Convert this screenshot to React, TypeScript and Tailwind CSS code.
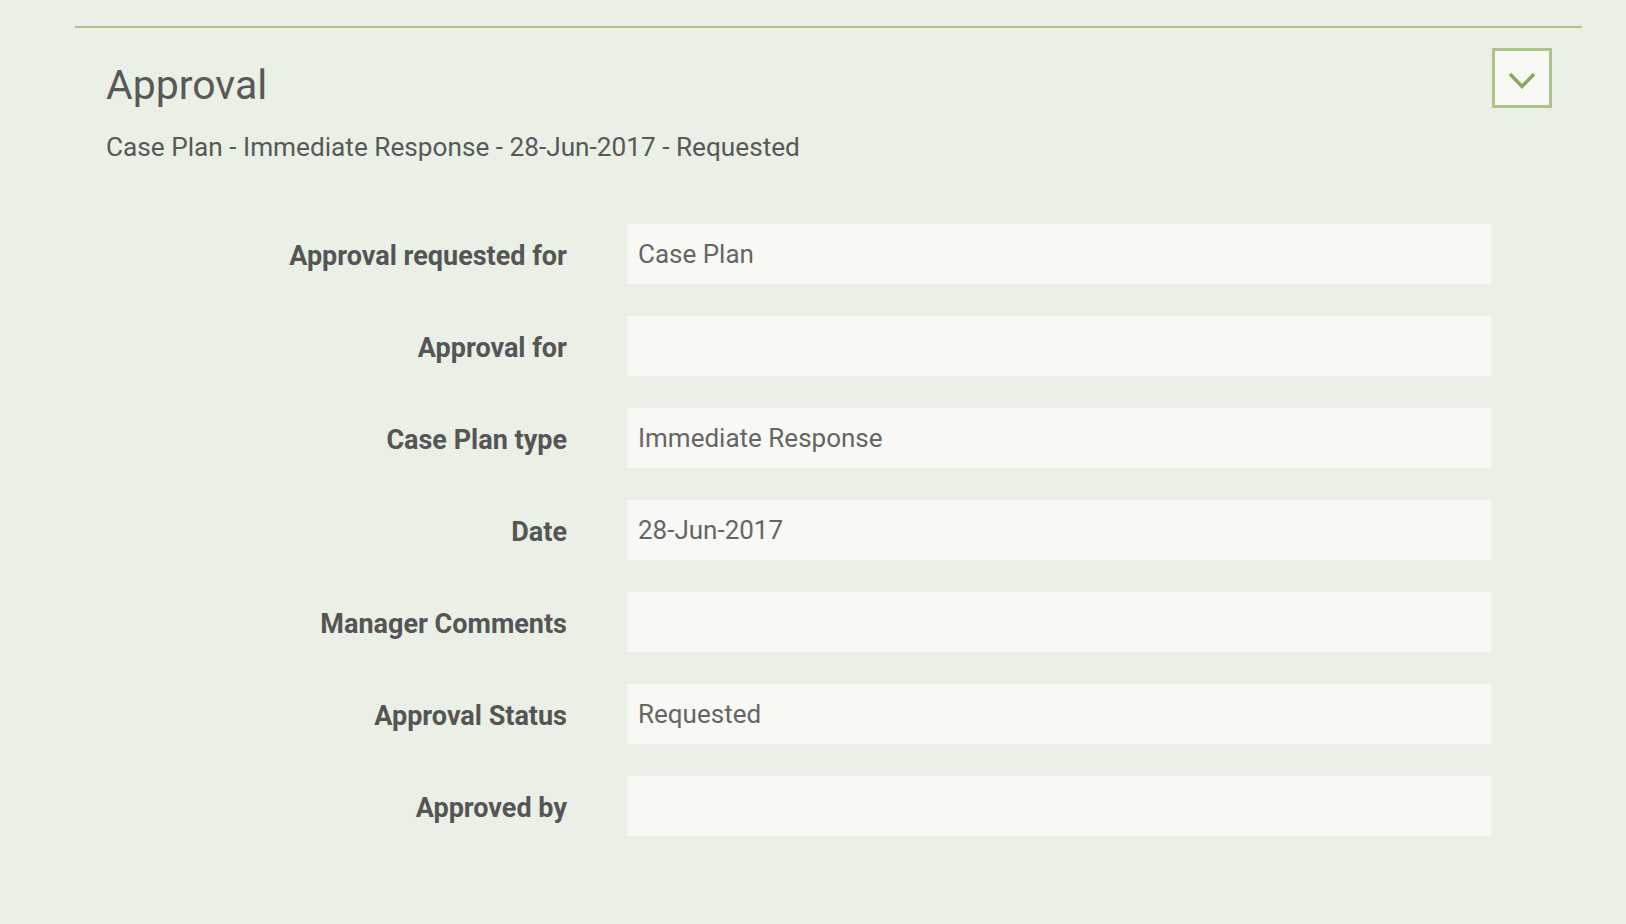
const fields: { label: string; value: string }[] = [
  { label: 'Approval requested for', value: 'Case Plan' },
  { label: 'Approval for', value: '' },
  { label: 'Case Plan type', value: 'Immediate Response' },
  { label: 'Date', value: '28-Jun-2017' },
  { label: 'Manager Comments', value: '' },
  { label: 'Approval Status', value: 'Requested' },
  { label: 'Approved by', value: '' },
];

function App() {
  return (
    <div className="min-h-screen bg-[#eaf0e5] pt-[26px] font-['Roboto',sans-serif]">
      <section className="ml-[75px] w-[1507px] border-t-2 border-[#abc589]">
        <div className="flex items-start justify-between pl-[31px] pr-[30px]">
          <div>
            <h2 className="mt-[33px] text-[41px] leading-[48px] text-[#585858]">Approval</h2>
            <p className="mt-[23px] text-[26.2px] leading-[30px] text-[#585858]">
              Case Plan - Immediate Response - 28-Jun-2017 - Requested
            </p>
          </div>
          <button className="mt-[20px] flex h-[60px] w-[60px] items-center justify-center border-[3px] border-[#abc589] bg-[#f8f9f4]">
            <svg width="28" height="18" viewBox="0 0 28 18" className="mt-[5px]">
              <polyline
                points="2,2 14,14.5 26,2"
                fill="none"
                stroke="#8aa960"
                strokeWidth="3.5"
              />
            </svg>
          </button>
        </div>

        <div className="mt-[62px] flex flex-col gap-[32px]">
          {fields.map((f) => (
            <div key={f.label} className="flex items-start">
              <label className="h-[60px] w-[492px] pt-[4px] text-right text-[27px] font-bold leading-[56px] text-[#555555]">
                {f.label}
              </label>
              <div className="ml-[60px] h-[60px] w-[864px] bg-[#f8f9f4] pl-[11px] text-[26px] leading-[61px] text-[#666666]">
                {f.value}
              </div>
            </div>
          ))}
        </div>
      </section>
    </div>
  );
}

export default App;
